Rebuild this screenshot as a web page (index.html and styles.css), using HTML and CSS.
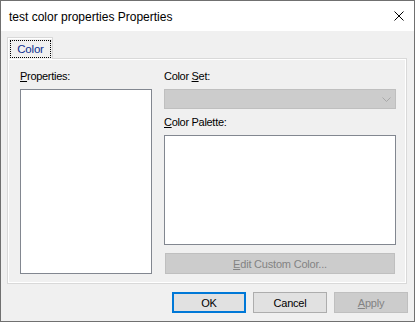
FILE: index.html
```html
<!DOCTYPE html>
<html lang="en">
<head>
  <meta charset="UTF-8">
  <meta name="viewport" content="width=device-width, initial-scale=1.0">
  <title>test color properties Properties</title>
  <link rel="stylesheet" href="styles.css">
</head>
<body>
  <div class="window">
    <div class="titlebar">
      <span class="title">test color properties Properties</span>
      <svg class="close-icon" width="10" height="10" viewBox="0 0 10 10">
        <path d="M0.5 0.5 L9.5 9.5 M9.5 0.5 L0.5 9.5" stroke="#000" stroke-width="1" fill="none"/>
      </svg>
    </div>

    <div class="dialog-body">
      <div class="tabs">
        <div class="tab active"><span class="tab-label">Color</span></div>
      </div>

      <div class="tab-page">
        <div class="col-left">
          <label class="field-label"><u>P</u>roperties:</label>
          <div class="listbox"></div>
        </div>
        <div class="col-right">
          <label class="field-label">Color <u>S</u>et:</label>
          <div class="combo disabled">
            <svg width="9" height="5" viewBox="0 0 9 5">
              <path d="M0.5 0.5 L4.5 4.5 L8.5 0.5" stroke="#a8a8a8" stroke-width="1" fill="none"/>
            </svg>
          </div>
          <label class="field-label second"><u>C</u>olor Palette:</label>
          <div class="palette"></div>
          <button class="btn disabled edit-btn"><u>E</u>dit Custom Color...</button>
        </div>
      </div>

      <div class="actions">
        <button class="btn default">OK</button>
        <button class="btn">Cancel</button>
        <button class="btn disabled"><u>A</u>pply</button>
      </div>
    </div>
  </div>
</body>
</html>
```

FILE: styles.css
```css
body {
  margin: 0;
  font-family: "Liberation Sans", Arial, sans-serif;
  font-size: 11px;
  color: #000;
}
.window {
  width: 415px;
  height: 322px;
  box-sizing: border-box;
  border: 1px solid #707070;
  background: #f0f0f0;
  display: flex;
  flex-direction: column;
}
.titlebar {
  height: 30px;
  background: #ffffff;
  display: flex;
  align-items: center;
  justify-content: space-between;
  padding: 0 10px 0 8px;
}
.title {
  font-size: 12px;
  line-height: 16px;
  margin-top: 1px;
}
.close-icon {
  display: block;
}
.dialog-body {
  flex: 1;
  display: flex;
  flex-direction: column;
  padding: 6px 6px 8px 6px;
}

/* tab strip */
.tabs {
  display: flex;
}
.tab {
  width: 46px;
  height: 22px;
  box-sizing: border-box;
  border: 1px solid #d9d9d9;
  border-bottom: none;
  background: #f0f0f0;
  box-shadow: inset 1px 1px 0 #ffffff;
  padding: 2px 1px 0 2px;
  margin-bottom: -1px;
  position: relative;
  z-index: 1;
  display: flex;
}
.tab-label {
  flex: 1;
  height: 18px;
  box-sizing: border-box;
  border: 1px dotted #000;
  color: #0c2f8f;
  font-size: 11.5px;
  display: flex;
  align-items: center;
  justify-content: center;
  letter-spacing: -0.2px;
}
.tab-page {
  width: 400px;
  height: 226px;
  box-sizing: border-box;
  border: 1px solid #d9d9d9;
  box-shadow: inset 0 0 0 1px #ffffff;
  padding: 10px 10px 9px 12px;
  display: grid;
  grid-template-columns: 132px 232px;
  column-gap: 12px;
}
.col-left,
.col-right {
  display: flex;
  flex-direction: column;
}
.field-label {
  line-height: 15px;
  height: 15px;
  margin-bottom: 5px;
  letter-spacing: -0.3px;
}
.field-label.second {
  margin-top: 6px;
}
u {
  text-underline-offset: 1px;
}
.listbox {
  flex: 1;
  background: #ffffff;
  border: 1px solid #828790;
}
.combo {
  height: 20px;
  box-sizing: border-box;
  border: 1px solid #bfbfbf;
  background: #cccccc;
  display: flex;
  align-items: center;
  justify-content: flex-end;
  padding-right: 4px;
}
.combo svg {
  display: block;
}
.palette {
  height: 110px;
  box-sizing: border-box;
  background: #ffffff;
  border: 1px solid #828790;
}

/* buttons */
.btn {
  font-family: "Liberation Sans", Arial, sans-serif;
  font-size: 11px;
  letter-spacing: -0.2px;
  height: 21px;
  width: 74px;
  box-sizing: border-box;
  border: 1px solid #adadad;
  background: #e1e1e1;
  color: #000;
  padding: 0;
  margin: 0;
}
.btn.default {
  border: 2px solid #0078d7;
}
.btn.disabled {
  border-color: #bfbfbf;
  background: #cccccc;
  color: #838383;
}
.edit-btn {
  width: 230px;
  margin: 8px 1px 0 1px;
}
.actions {
  display: flex;
  justify-content: flex-end;
  gap: 7px;
  margin-top: 8px;
}
```
